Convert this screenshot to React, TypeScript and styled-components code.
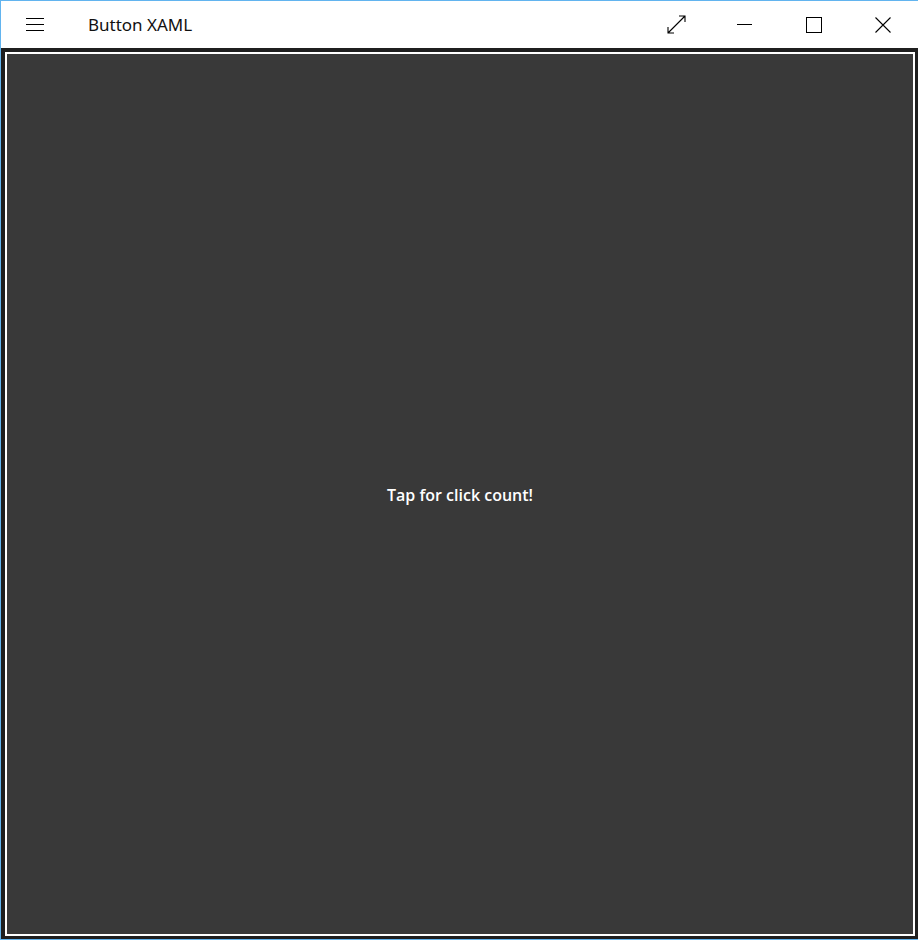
import React from "react";
import styled, { createGlobalStyle } from "styled-components";

const Global = createGlobalStyle`
  html, body { margin: 0; padding: 0; background: #ffffff; }
  #root { width: 918px; height: 940px; }
`;

const Window = styled.div`
  width: 918px;
  height: 940px;
  box-sizing: border-box;
  border-left: 1px solid #62b4ef;
  border-top: 1px solid #62b4ef;
  border-bottom: 1px solid #62b4ef;
  display: flex;
  flex-direction: column;
  font-family: "Noto Sans", "Open Sans", sans-serif;
`;

const TitleBar = styled.div`
  height: 47px;
  flex: none;
  display: flex;
  align-items: center;
  background: #ffffff;
`;

const MenuButton = styled.div`
  width: 69px;
  height: 47px;
  box-sizing: border-box;
  padding-right: 2px;
  display: flex;
  align-items: center;
  justify-content: center;
  flex: none;
`;

const Title = styled.div`
  margin-left: 18px;
  font-size: 17px;
  color: #111111;
  flex: 1;
  line-height: 47px;
`;

const CaptionButton = styled.div<{ $padRight?: number }>`
  width: 69px;
  height: 47px;
  box-sizing: border-box;
  padding-right: ${(p) => (p.$padRight ?? 2)}px;
  display: flex;
  align-items: center;
  justify-content: center;
  flex: none;
`;

const Content = styled.div`
  flex: 1;
  background: #1f1f1f;
  padding: 4px 3px 3px 4px;
  display: flex;
`;

const ButtonFace = styled.div`
  flex: 1;
  border: 2px solid #ffffff;
  background: #393939;
  display: flex;
  align-items: center;
  justify-content: center;
  color: #ffffff;
  font-family: "Open Sans", "Noto Sans", sans-serif;
  font-weight: 600;
  font-size: 16px;
  padding-top: 2px;
`;

const Label = styled.span``;

export default function App() {
  return (
    <>
      <Global />
      <Window>
        <TitleBar>
          <MenuButton>
            <svg width="18" height="14" viewBox="0 0 18 14" shapeRendering="crispEdges">
              <path d="M0 0.5H18M0 6.5H18M0 12.5H18" stroke="#000" strokeWidth="1" />
            </svg>
          </MenuButton>
          <Title>Button XAML</Title>
          <CaptionButton $padRight={0}>
            <svg width="19" height="19" viewBox="0 0 19 19">
              <path d="M1 18L18 1M12 1H18V7M1 12V18H7" stroke="#000" strokeWidth="1.1" fill="none" />
            </svg>
          </CaptionButton>
          <CaptionButton>
            <svg width="16" height="16" viewBox="0 0 16 16" shapeRendering="crispEdges">
              <path d="M0 7.5H15" stroke="#000" strokeWidth="1" />
            </svg>
          </CaptionButton>
          <CaptionButton>
            <svg width="16" height="16" viewBox="0 0 16 16" shapeRendering="crispEdges">
              <rect x="0.5" y="0.5" width="15" height="15" stroke="#000" strokeWidth="1" fill="none" />
            </svg>
          </CaptionButton>
          <CaptionButton>
            <svg width="16" height="16" viewBox="0 0 16 16">
              <path d="M0.5 0.5L15.5 15.5M15.5 0.5L0.5 15.5" stroke="#000" strokeWidth="1.1" />
            </svg>
          </CaptionButton>
        </TitleBar>
        <Content>
          <ButtonFace>
            <Label>Tap for click count!</Label>
          </ButtonFace>
        </Content>
      </Window>
    </>
  );
}
